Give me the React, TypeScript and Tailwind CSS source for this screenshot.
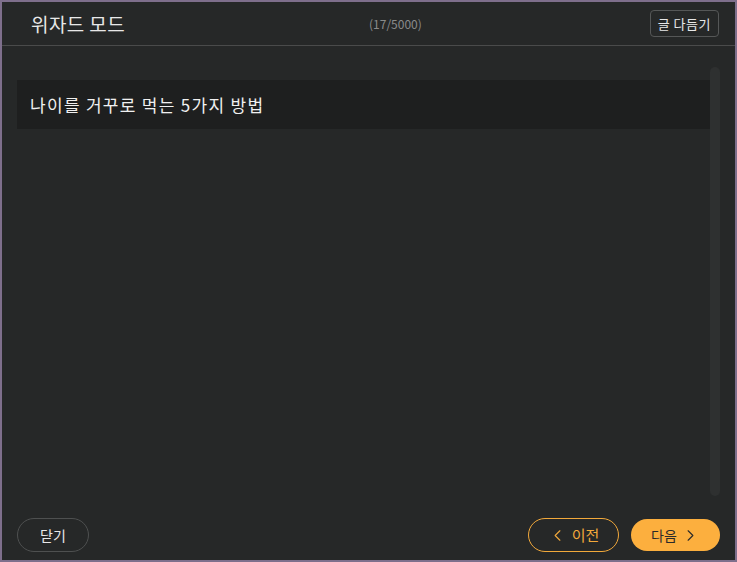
import { ChevronLeft, ChevronRight } from "lucide-react";

const font = { fontFamily: '"Noto Sans CJK KR", "Noto Sans", sans-serif' };

const App = () => {
  return (
    <div
      className="w-[737px] h-[562px] border-2 border-[#7e6f8c] bg-[#262828] flex flex-col text-[#e8e8e8]"
      style={font}
    >
      {/* header */}
      <div className="h-[44px] shrink-0 border-b border-[#4a4b4b] flex items-center pl-[29px] pr-[16px]">
        <div className="w-[338px] text-[19px] tracking-[0.4px] leading-none">위자드 모드</div>
        <div className="text-[12px] text-[#8a8b8b]">(17/5000)</div>
        <div className="flex-1 flex justify-end">
          <button className="h-[27px] px-[7px] rounded-[4px] border border-[#555757] text-[13px] tracking-[0.5px] leading-none">
            글 다듬기
          </button>
        </div>
      </div>

      {/* body */}
      <div className="flex-1 flex pl-[15px] pr-[15px]">
        <div className="flex-1 pt-[34px]">
          <div className="h-[49px] bg-[#1e1f1f] flex items-center pl-[13px] text-[17px] tracking-[1.3px] text-[#f0f0f0]">
            나이를 거꾸로 먹는 5가지 방법
          </div>
        </div>
        <div className="w-[10px] mt-[21px] h-[429px] rounded-full bg-[#2e3030]" />
      </div>

      {/* footer */}
      <div className="h-[42px] shrink-0 flex items-start justify-between pl-[15px] pr-[15px]">
        <button className="h-[34px] w-[72px] rounded-full border border-[#4e5050] text-[14px]">
          닫기
        </button>
        <div className="flex gap-[12px]">
          <button className="h-[34px] w-[91px] rounded-full border border-[#f2a93b] text-[#f2a93b] text-[15px] flex items-center justify-center gap-[5px]">
            <ChevronLeft className="w-[19px] h-[19px]" strokeWidth={1.4} />
            <span>이전</span>
          </button>
          <button className="h-[32px] w-[89px] mt-[1px] rounded-full bg-[#fcaf3e] text-[#2a2a2a] text-[14px] flex items-center justify-center gap-[4px]">
            <span>다음</span>
            <ChevronRight className="w-[19px] h-[19px]" strokeWidth={1.4} />
          </button>
        </div>
      </div>
    </div>
  );
};

export default App;
